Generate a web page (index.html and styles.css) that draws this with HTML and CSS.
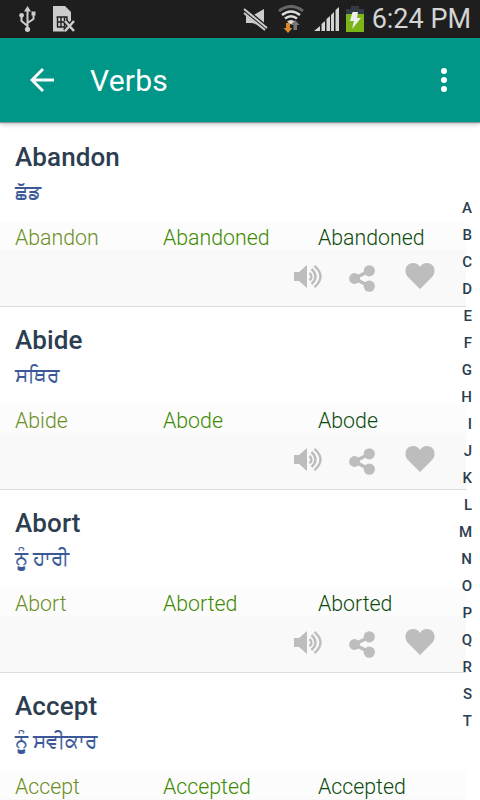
FILE: index.html
```
<!DOCTYPE html>
<html lang="en">
<head>
    <meta charset="UTF-8">
    <meta name="viewport" content="width=device-width, initial-scale=1.0">
    <title>Verbs</title>
    <link rel="stylesheet" href="styles.css">
</head>
<body>
    <!-- Shared icons -->
    <svg class="icon-defs" width="0" height="0">
        <symbol id="icon-sound" viewBox="0 0 30 26">
            <path d="M0 8h5l8-7v23l-8-7H0z" fill="#bdbdbd"/>
            <path d="M15.500 9q4 3.700 0 7.400M17.500 5q8 7.500 0 15M20.500 1.800q12 10.700 0 21.400" fill="none" stroke="#bdbdbd" stroke-width="2.400"/>
        </symbol>
        <symbol id="icon-share" viewBox="0 0 26 27">
            <path d="M20 6 5.500 13.500 20 21" fill="none" stroke="#bdbdbd" stroke-width="3.600"/>
            <circle cx="5.500" cy="13.500" r="5.400" fill="#bdbdbd"/>
            <circle cx="20.300" cy="5.800" r="5.600" fill="#bdbdbd"/>
            <circle cx="20.300" cy="21.200" r="5.600" fill="#bdbdbd"/>
        </symbol>
        <symbol id="icon-heart" viewBox="0 0 30 26">
            <path d="M15 26 3 14C-1.500 9.500 0 0 8 0c3.500 0 6 2 7 4 1-2 3.500-4 7-4 8 0 9.500 9.500 5 14z" fill="#bdbdbd"/>
        </symbol>
    </svg>

    <div class="status-bar">
        <svg class="status-icon usb" width="17" height="26" viewBox="0 0 17 26" fill="none" stroke="#ccc" stroke-width="2">
            <path d="M8.500 5v18M8.500 20 2.500 15V9.500M8.500 17l6-4V8"/>
            <path d="M8.500 0 12 5.500H5zM12.500 5.500h4v4h-4z" fill="#ccc" stroke="none"/>
            <circle cx="2.600" cy="9.300" r="2.400" fill="#ccc" stroke="none"/>
            <circle cx="8.500" cy="23.300" r="2.600" fill="#ccc" stroke="none"/>
        </svg>
        <svg class="status-icon" width="23" height="26" viewBox="0 0 23 26">
            <path d="M0 0h12l6 6v9l-3 10.500H0z" fill="#ccc"/>
            <path d="M3.500 11h11M4.500 11v10M8 11v10M11.500 11v10M14 11v5M4 16h9M4 21h8" fill="none" stroke="#1e1e1e" stroke-width="1.400"/>
            <path d="m12 15 9 10m0-10-9 10" stroke="#1e1e1e" stroke-width="5"/>
            <path d="m12 15 9 10m0-10-9 10" stroke="#ccc" stroke-width="2.600"/>
        </svg>
        <div class="status-right">
            <svg class="status-icon mute" width="25" height="23" viewBox="0 0 25 23">
                <path d="M3 8h6L21 1v18L9 15H3z" fill="#ccc"/>
                <path d="m1 2 23 19" stroke="#1e1e1e" stroke-width="6"/>
                <path d="m1 1 23 19M1 5l21 17" stroke="#ccc" stroke-width="2"/>
            </svg>
            <svg class="status-icon wifi" width="26" height="28" viewBox="0 0 26 28" fill="none">
                <path d="M1 6q12-9 24 0" stroke="#666" stroke-width="3"/>
                <path d="M4 10q9-7 18 0M7 13.500q6-4.500 12 0" stroke="#ddd" stroke-width="2.600"/>
                <path d="m9 16.500q4-3 8 0l-4 3z" fill="#ddd"/>
                <path d="M8 18h4v5h2.500L10 28l-4.500-5H8z" fill="#d58a2c"/>
                <path d="M15.500 25v-5H13l4.200-5 4.300 5H19v5z" fill="#777"/>
            </svg>
            <svg class="status-icon signal" width="25" height="24" viewBox="0 0 25 24" fill="#d4d4d4">
                <path d="M0 24 6 19v5zM7.500 24v-7l3.500-3v10zM12.500 24V12l3.500-3v15zM17 24V8l3-3v19zM21.500 24V3L25 0v24z"/>
            </svg>
            <svg class="status-icon battery" width="18" height="26" viewBox="0 0 18 26">
                <path d="M5 0h8v3h5v23H0V3h5z" fill="#333c44"/>
                <path d="M0 8h18v18H0z" fill="#7cb518"/>
                <path d="M6.500 6H12l-1 6h4L6 23l2-8H4z" fill="#eee"/>
            </svg>
            <span class="clock">6:24 PM</span>
        </div>
    </div>

    <div class="toolbar">
        <svg class="back" width="24" height="24" viewBox="0 0 24 24" fill="none" stroke="#fff" stroke-width="2.900">
            <path d="M24 12H2M13 1 2 12l11 11"/>
        </svg>
        <h1>Verbs</h1>
        <svg class="more" width="6" height="24" viewBox="0 0 6 24" fill="#fff">
            <circle cx="3" cy="3" r="3"/>
            <circle cx="3" cy="12" r="3"/>
            <circle cx="3" cy="21" r="3"/>
        </svg>
    </div>

    <div class="content">
        <div class="verb-list">
            <div class="verb">
                <h2>Abandon</h2>
                <p class="meaning" lang="pa">ਛੱਡ</p>
                <div class="forms">
                    <span class="base">Abandon</span>
                    <span class="past">Abandoned</span>
                    <span class="participle">Abandoned</span>
                </div>
                <div class="actions">
                    <svg class="sound"><use href="#icon-sound"/></svg>
                    <svg class="share"><use href="#icon-share"/></svg>
                    <svg class="heart"><use href="#icon-heart"/></svg>
                </div>
            </div>
            <div class="verb">
                <h2>Abide</h2>
                <p class="meaning" lang="pa">ਸਥਿਰ</p>
                <div class="forms">
                    <span class="base">Abide</span>
                    <span class="past">Abode</span>
                    <span class="participle">Abode</span>
                </div>
                <div class="actions">
                    <svg class="sound"><use href="#icon-sound"/></svg>
                    <svg class="share"><use href="#icon-share"/></svg>
                    <svg class="heart"><use href="#icon-heart"/></svg>
                </div>
            </div>
            <div class="verb">
                <h2>Abort</h2>
                <p class="meaning" lang="pa">ਨੂੰ ਹਾਰੀ</p>
                <div class="forms">
                    <span class="base">Abort</span>
                    <span class="past">Aborted</span>
                    <span class="participle">Aborted</span>
                </div>
                <div class="actions">
                    <svg class="sound"><use href="#icon-sound"/></svg>
                    <svg class="share"><use href="#icon-share"/></svg>
                    <svg class="heart"><use href="#icon-heart"/></svg>
                </div>
            </div>
            <div class="verb last">
                <h2>Accept</h2>
                <p class="meaning" lang="pa">ਨੂੰ ਸਵੀਕਾਰ</p>
                <div class="forms">
                    <span class="base">Accept</span>
                    <span class="past">Accepted</span>
                    <span class="participle">Accepted</span>
                </div>
            </div>
        </div>

        <!-- Alphabet index -->
        <div class="alphabet">
            <span>A</span>
            <span>B</span>
            <span>C</span>
            <span>D</span>
            <span>E</span>
            <span>F</span>
            <span>G</span>
            <span>H</span>
            <span>I</span>
            <span>J</span>
            <span>K</span>
            <span>L</span>
            <span>M</span>
            <span>N</span>
            <span>O</span>
            <span>P</span>
            <span>Q</span>
            <span>R</span>
            <span>S</span>
            <span>T</span>
        </div>
    </div>
</body>
</html>
```
FILE: styles.css
```
* {
    box-sizing: border-box;
}

body {
    margin: 0;
    height: 800px;
    overflow: hidden;
    display: flex;
    flex-direction: column;
    background-color: #fff;
    font-family: Roboto, "Noto Sans", sans-serif;
}

.icon-defs {
    position: absolute;
}

/* Status bar */
.status-bar {
    display: flex;
    flex-shrink: 0;
    height: 38px;
    padding: 6px 9px 0 19px;
    background-color: #1e1e1e;
}

.status-icon {
    flex-shrink: 0;
}

.usb {
    margin-right: 17px;
}

.status-right {
    display: flex;
    margin-left: auto;
}

.mute {
    margin-top: 2px;
}

.wifi {
    margin: -1px 0 0 10px;
}

.signal {
    margin: 1px 0 0 10px;
}

.battery {
    margin: 0 0 0 7px;
}

.clock {
    margin-left: 8px;
    color: #d4d4d4;
    font-size: 27px;
    line-height: 27px;
    white-space: nowrap;
}

/* Toolbar */
.toolbar {
    display: flex;
    align-items: center;
    flex-shrink: 0;
    height: 84px;
    padding: 0 33px 0 30px;
    background-color: #009688;
    box-shadow: 0 1px 1px #8a9a9a, 0 2px 5px rgba(0, 0, 0, 0.25);
    z-index: 1;
}

.toolbar h1 {
    margin: 2px 0 0 36px;
    color: #fff;
    font-size: 30px;
    font-weight: 400;
    letter-spacing: 0.2px;
    line-height: 36px;
}

.more {
    margin-left: auto;
}

/* Verb list */
.content {
    display: flex;
    flex: 1;
    min-height: 0;
    overflow: hidden;
}

.verb-list {
    flex: 0 0 466px;
    padding-top: 2px;
}

.verb {
    height: 183px;
    padding-top: 16px;
    border-bottom: 1px solid #ddd;
    background: linear-gradient(#fff 98px, #fcfcfc 98px, #fcfcfc 126px, #f9f9f9 126px);
}

/* Cut off by the bottom of the screen */
.verb.last {
    height: 127px;
    border-bottom: none;
}

.verb h2 {
    margin: 0 0 0 15px;
    color: #2c3e50;
    font-size: 26px;
    font-weight: 500;
    letter-spacing: 0.1px;
    line-height: 34px;
}

.meaning {
    margin: 0 0 0 15px;
    height: 48px;
    color: #3b5998;
    font-size: 20px;
    line-height: 36px;
    -webkit-text-stroke: 0.2px #3b5998;
}

.forms {
    display: grid;
    grid-template-columns: 148px 155px 1fr;
    height: 32px;
    padding-left: 15px;
    font-size: 21.3px;
    font-weight: 300;
    line-height: 32px;
}

.base {
    color: #6b8e23;
}

.past {
    color: #3e8a00;
}

.participle {
    color: #0b4a0b;
}

.actions {
    display: flex;
    justify-content: flex-end;
    padding: 9px 31px 0 0;
}

.sound {
    width: 30px;
    height: 26px;
    margin: 1px 25px 0 0;
}

.share {
    width: 26px;
    height: 27px;
    margin: 2px 30px 0 0;
}

.heart {
    width: 30px;
    height: 26px;
}

/* Alphabet index */
.alphabet {
    display: flex;
    flex-direction: column;
    align-items: flex-end;
    flex: 1;
    min-width: 0;
    padding: 73px 8px 0 0;
    color: #2c3e50;
    font-size: 15px;
    font-weight: 500;
    line-height: 27px;
}
```
